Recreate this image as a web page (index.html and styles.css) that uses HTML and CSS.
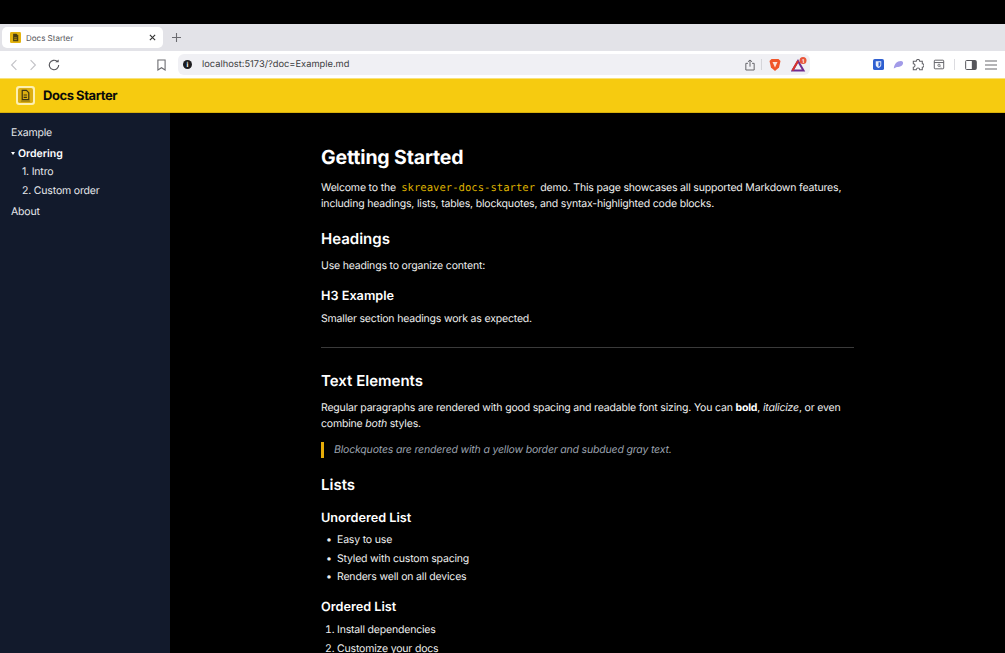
FILE: index.html
```html
<!DOCTYPE html>
<html lang="en">
  <head>
    <meta charset="UTF-8" />
    <title>Docs Starter</title>
    <link rel="stylesheet" href="styles.css">
  </head>
  <body>
    <div class="window">
      <!-- Browser chrome -->
      <div class="tabstrip">
        <div class="tab">
          <svg class="favicon" viewBox="0 0 16 16" width="11" height="11">
            <rect width="16" height="16" rx="2" fill="#e3b30e" />
            <path d="M4.5 2.5h5l2.5 2.5v8.5h-7.5z" fill="#4a3f12" />
            <path d="M6 8.5h4M6 11h4" stroke="#e3b30e" stroke-width="1" />
          </svg>
          <span class="tab-title">Docs Starter</span>
          <svg class="tab-close" viewBox="0 0 8 8" width="7" height="7">
            <path d="M1 1l6 6M7 1l-6 6" stroke="#333" stroke-width="1.3" />
          </svg>
        </div>
        <svg class="tab-new" viewBox="0 0 10 10" width="9" height="9">
          <path d="M5 0v10M0 5h10" stroke="#6b6b70" stroke-width="1.2" />
        </svg>
      </div>

      <div class="toolbar">
        <svg class="nav-btn" viewBox="0 0 10 14" width="8" height="12">
          <path d="M8 1L2 7l6 6" fill="none" stroke="#c2c2c6" stroke-width="1.4" />
        </svg>
        <svg class="nav-btn" viewBox="0 0 10 14" width="8" height="12">
          <path d="M2 1l6 6-6 6" fill="none" stroke="#c2c2c6" stroke-width="1.4" />
        </svg>
        <svg class="nav-btn" viewBox="0 0 14 14" width="12" height="12">
          <path d="M12.5 7a5.5 5.5 0 1 1-1.8-4.1" fill="none" stroke="#55555a" stroke-width="1.3" />
          <path d="M8.5 3.8h4V0.5z" fill="#55555a" />
        </svg>
        <svg class="bookmark" viewBox="0 0 10 13" width="9" height="12">
          <path d="M1 1h8v11L5 9.5 1 12z" fill="none" stroke="#6a6a6f" stroke-width="1.2" />
        </svg>

        <div class="urlbar">
          <span class="info-icon">i</span>
          <span class="url">localhost:5173/?doc=Example.md</span>
          <svg class="share" viewBox="0 0 12 14" width="10" height="12">
            <path d="M3.5 5H1v8h10V5H8.5M6 9V1M3.5 3.2L6 1l2.5 2.2" fill="none" stroke="#66666b" stroke-width="1.2" />
          </svg>
          <span class="url-sep"></span>
          <svg class="brave" viewBox="0 0 12 14" width="12" height="14">
            <path d="M2.5 1h7L11.5 3 10 9.5 6 13 2 9.5 0.5 3z" fill="#f0562a" />
            <path d="M3.5 4h5L6 9.5z" fill="#fbe3da" />
          </svg>
          <svg class="rewards" viewBox="0 0 16 15" width="16" height="15">
            <path d="M7 4L12.5 13.5H1.5z" fill="none" stroke="#6f2c8f" stroke-width="2" />
            <path d="M7 4L1.5 13.5" stroke="#d9342b" stroke-width="2" />
            <circle cx="12" cy="3.5" r="3.5" fill="#e8553a" />
            <text class="badge-num" x="12" y="5.5">1</text>
          </svg>
        </div>

        <div class="extensions">
          <svg viewBox="0 0 12 12" width="11" height="11">
            <rect width="12" height="12" rx="2" fill="#2f5fd0" />
            <path d="M3 2.5h6v4c0 1.5-1.5 2.5-3 3.3-1.5-.8-3-1.8-3-3.3z" fill="#e8eefb" />
            <path d="M6 3.5h2v3c0 .8-1 1.4-2 2z" fill="#2f5fd0" />
          </svg>
          <svg viewBox="0 0 14 12" width="11" height="10">
            <path d="M1 10.5C1.5 5 5 1 10 1c2.5 0 3.5 2 2.5 4-1 2.5-4 3.5-6 3.5-2 0-4 .8-5.5 2z" fill="#a29be8" />
          </svg>
          <svg viewBox="0 0 14 14" width="12" height="12">
            <path d="M5 2.500a2 2 0 0 1 4 0h3v3a2 2 0 0 1 0 4v3H9a2 2 0 0 0-4 0H1.5V9.5a2 2 0 0 0 0-4V2.500z" fill="none" stroke="#5f5f64" stroke-width="1.2" />
          </svg>
          <svg viewBox="0 0 14 14" width="12" height="11">
            <rect x="1" y="1.5" width="12" height="11" rx="1" fill="none" stroke="#5f5f64" stroke-width="1.2" />
            <path d="M1 4.5h12" stroke="#5f5f64" stroke-width="1.2" />
            <circle cx="7" cy="8" r="1.5" fill="none" stroke="#5f5f64" />
            <path d="M8 9.2l1.5 1.5" stroke="#5f5f64" />
          </svg>
          <span class="ext-sep"></span>
          <svg viewBox="0 0 14 12" width="12" height="10">
            <rect x="0.6" y="0.6" width="12.8" height="10.8" rx="1" fill="none" stroke="#55555a" stroke-width="1.2" />
            <rect x="8" y="1" width="5" height="10" fill="#55555a" />
          </svg>
          <svg viewBox="0 0 12 10" width="12" height="10">
            <path d="M0 1h12M0 5h12M0 9h12" stroke="#6a6a6f" stroke-width="1.1" />
          </svg>
        </div>
      </div>

      <!-- App header -->
      <header class="app-header">
        <span class="logo">
          <svg viewBox="0 0 16 16" width="15" height="15">
            <rect width="16" height="16" rx="2" fill="#dcae10" />
            <path d="M4.5 2.5h4.5l2.5 2.5v7.5h-7z" fill="none" stroke="#3f3510" stroke-width="1.3" />
            <path d="M6 7.5h3.5M6 10h3.5" stroke="#3f3510" stroke-width="1.2" />
            <path d="M3 14h10" stroke="#7a6510" stroke-width="0.8" />
          </svg>
        </span>
        <span class="app-title">Docs Starter</span>
      </header>

      <div class="app-body">
        <nav class="sidebar">
          <a class="nav-item" href="#">Example</a>
          <div class="nav-group"><span class="caret"></span>Ordering</div>
          <a class="nav-sub" href="#">1. Intro</a>
          <a class="nav-sub" href="#">2. Custom order</a>
          <a class="nav-item" href="#">About</a>
        </nav>

        <main class="content">
          <article class="doc">
            <h1>Getting Started</h1>
            <p>Welcome to the <code>skreaver-docs-starter</code> demo. This page showcases all supported Markdown features, including headings, lists, tables, blockquotes, and syntax-highlighted code blocks.</p>

            <h2>Headings</h2>
            <p>Use headings to organize content:</p>
            <h3>H3 Example</h3>
            <p>Smaller section headings work as expected.</p>
            <hr />

            <h2>Text Elements</h2>
            <p>Regular paragraphs are rendered with good spacing and readable font sizing. You can <strong>bold</strong>, <em>italicize</em>, or even combine <em>both</em> styles.</p>
            <blockquote>Blockquotes are rendered with a yellow border and subdued gray text.</blockquote>

            <h2>Lists</h2>
            <h3>Unordered List</h3>
            <ul>
              <li>Easy to use</li>
              <li>Styled with custom spacing</li>
              <li>Renders well on all devices</li>
            </ul>
            <h3>Ordered List</h3>
            <ol>
              <li>Install dependencies</li>
              <li>Customize your docs</li>
            </ol>
          </article>
        </main>
      </div>
    </div>
  </body>
</html>
```

FILE: styles.css
```css
* {
  margin: 0;
  padding: 0;
  box-sizing: border-box;
}

html,
body {
  height: 100%;
  overflow: hidden;
}

body {
  font-family: "Inter", "Liberation Sans", sans-serif;
  text-rendering: geometricPrecision;
  background: #000;
  color: #fff;
}

.window {
  height: 653px;
  padding-top: 24px;
  display: flex;
  flex-direction: column;
}

/* Browser chrome */
.tabstrip {
  height: 27px;
  background: #e3e3e8;
  display: flex;
  align-items: center;
  padding-left: 2px;
}

.tab {
  width: 161px;
  height: 21px;
  background: #fff;
  border-radius: 5px;
  display: flex;
  align-items: center;
  padding: 0 7px 0 8px;
  color: #55555a;
  font-size: 8px;
}

.tab-title {
  flex: 1;
  margin-left: 5px;
}

.tab-new {
  margin-left: 9px;
}

.toolbar {
  height: 27px;
  background: #fff;
  display: flex;
  align-items: center;
  padding-left: 10px;
}

.nav-btn {
  margin-right: 11px;
}

.bookmark {
  margin-left: 86px;
}

.urlbar {
  width: 632px;
  height: 21px;
  margin-left: 12px;
  background: #f0f0f4;
  border-radius: 6px;
  display: flex;
  align-items: center;
  padding: 0 3px 0 5px;
}

.info-icon {
  width: 9px;
  height: 9px;
  border-radius: 50%;
  background: #1d1d20;
  color: #fff;
  font-size: 7px;
  font-weight: 700;
  line-height: 9px;
  text-align: center;
}

.url {
  flex: 1;
  margin-left: 10px;
  color: #3c3c40;
  font-size: 9.3px;
}

.url-sep {
  width: 1px;
  height: 11px;
  background: #d5d5d9;
  margin: 0 7px 0 6px;
}

.rewards {
  margin-left: 10px;
}

.badge-num {
  font-size: 5px;
  font-weight: 700;
  fill: #fff;
  text-anchor: middle;
}

.extensions {
  flex: 1;
  display: flex;
  align-items: center;
  gap: 8.5px;
  padding-left: 63px;
}

.ext-sep {
  width: 1px;
  height: 11px;
  background: #dcdce0;
  margin: 0 1px;
}

/* App header */
.app-header {
  height: 35px;
  background: #f6cb10;
  border-top: 1px solid #f8e27a;
  border-bottom: 1px solid #d9b00c;
  display: flex;
  align-items: center;
  padding-left: 16px;
  color: #0b0b0b;
}

.logo {
  width: 19px;
  height: 19px;
  background: #fdf0b0;
  border-radius: 3px;
  display: flex;
  align-items: center;
  justify-content: center;
}

.app-title {
  margin-left: 8px;
  padding-top: 1px;
  font-size: 13px;
  font-weight: 700;
  letter-spacing: -0.45px;
}

.app-body {
  flex: 1;
  display: flex;
  min-height: 0;
}

/* Sidebar */
.sidebar {
  width: 170px;
  flex-shrink: 0;
  background: #121a2c;
  padding: 11.5px 11px;
  font-size: 10.5px;
  letter-spacing: -0.18px;
}

.sidebar a {
  display: block;
  color: #e5e7eb;
  text-decoration: none;
}

.nav-item {
  line-height: 16px;
}

.nav-group {
  margin-top: 5px;
  line-height: 16px;
  font-weight: 600;
  letter-spacing: 0;
  display: flex;
  align-items: center;
}

.caret {
  width: 0;
  height: 0;
  border-left: 2px solid transparent;
  border-right: 2px solid transparent;
  border-top: 3px solid #fff;
  margin-right: 3px;
}

.nav-sub {
  padding-left: 11px;
  margin-top: 2.5px;
  line-height: 16px;
}

.nav-sub + .nav-item {
  margin-top: 5.5px;
}

/* Document */
.content {
  flex: 1;
  min-width: 0;
  background: #000;
  padding: 32px 151px 0;
  overflow: hidden;
}

.doc {
  font-size: 10.5px;
  letter-spacing: -0.18px;
  line-height: 16px;
  color: #eeeeee;
}

.doc h1 {
  font-size: 19.5px;
  letter-spacing: -0.15px;
  line-height: 24px;
  font-weight: 700;
  color: #fff;
  margin-bottom: 11px;
}

.doc h2 {
  font-size: 15px;
  letter-spacing: 0;
  line-height: 20px;
  font-weight: 600;
  color: #fff;
  margin: 17px 0 9px;
}

.doc h3 {
  font-size: 12.7px;
  letter-spacing: 0;
  line-height: 16px;
  font-weight: 600;
  color: #fff;
  margin: 15px 0 6px;
}

.doc h2 + h3 {
  margin: 16px 0 5px;
}

.doc code {
  font-family: "DejaVu Sans Mono", monospace;
  font-size: 10.6px;
  letter-spacing: 0;
  line-height: 1;
  color: #dcb000;
  padding: 0 2.5px;
}

.doc strong {
  color: #fff;
}

.doc hr {
  border: 0;
  border-top: 1px solid #3a3a3a;
  margin: 19.5px 0 23.5px;
}

.doc blockquote {
  border-left: 3px solid #e6ac08;
  padding-left: 10px;
  margin: 10px 0;
  color: #9ca3af;
  font-style: italic;
}

.doc ul,
.doc ol {
  padding-left: 16px;
}

.doc ul {
  margin-bottom: 1px;
}

.doc ul li::marker {
  content: "•\00a0\00a0";
}

.doc li {
  margin-bottom: 2.5px;
}
```
